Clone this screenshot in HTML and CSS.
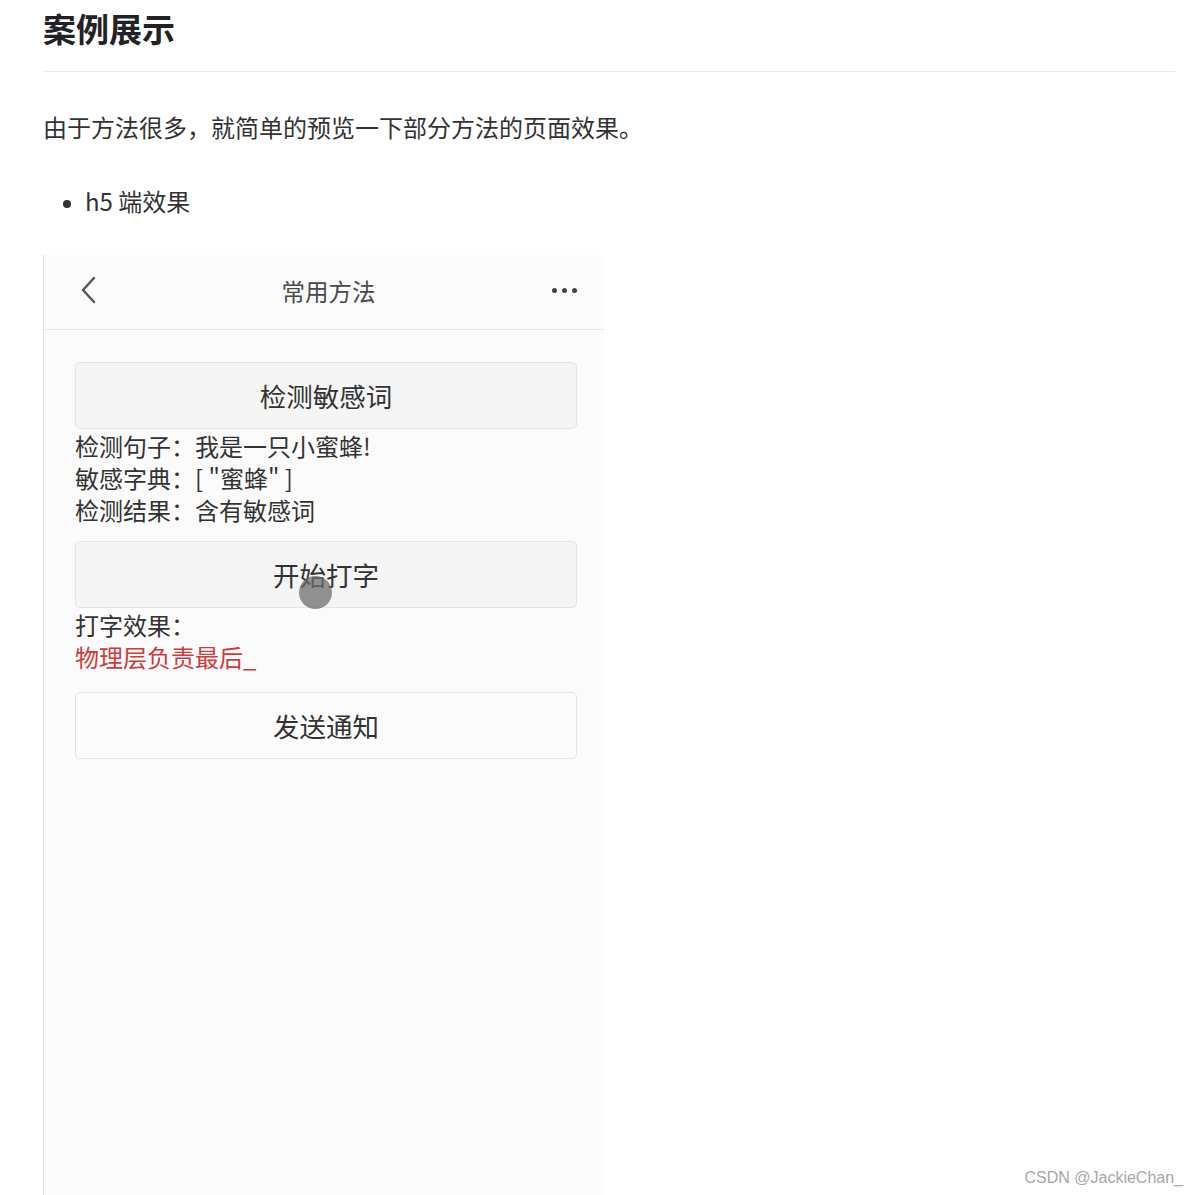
FILE: index.html
```html
<!DOCTYPE html>
<html lang="zh-CN">
<head>
<meta charset="utf-8">
<title>案例展示</title>
<link rel="stylesheet" href="styles.css">
</head>
<body>
<main class="article">
  <h2 class="title">案例展示</h2>
  <p class="intro">由于方法很多，就简单的预览一下部分方法的页面效果。</p>
  <ul class="list">
    <li>h5 端效果</li>
  </ul>
  <div class="phone">
    <header class="nav">
      <svg class="nav-back" width="20" height="30" viewBox="0 0 20 30"><path d="M15 3 L4 15 L15 27" fill="none" stroke="#555" stroke-width="2.4" stroke-linecap="round" stroke-linejoin="round"/></svg>
      <span class="nav-title">常用方法</span>
      <span class="nav-more"><i></i><i></i><i></i></span>
    </header>
    <section class="content">
      <div class="btn">检测敏感词</div>
      <div class="lines lines-a">
        <div>检测句子：我是一只小蜜蜂!</div>
        <div>敏感字典：[ "蜜蜂" ]</div>
        <div>检测结果：含有敏感词</div>
      </div>
      <div class="btn">开始打字<span class="touch"></span></div>
      <div class="lines lines-b">
        <div class="first">打字效果：</div>
        <div class="red">物理层负责最后_</div>
      </div>
      <div class="btn btn-light">发送通知</div>
    </section>
  </div>
</main>
<div class="watermark">CSDN @JackieChan_</div>
</body>
</html>
```

FILE: styles.css
```css
html, body {
  margin: 0;
  padding: 0;
  background: #ffffff;
}
body {
  font-family: "Noto Sans CJK SC", "Noto Sans", sans-serif;
  color: #333;
  height: 1195px;
  overflow: hidden;
  position: relative;
}
.article {
  width: 1132px;
  margin-left: 43px;
}
.title {
  margin: 0;
  padding-top: 8px;
  padding-bottom: 23px;
  font-size: 33px;
  line-height: 40px;
  font-weight: 700;
  color: #222226;
  border-bottom: 1px solid #e8e8ed;
}
.intro {
  margin: 37px 0 0;
  font-size: 24px;
  line-height: 36px;
  color: #333;
}
.list {
  margin: 38px 0 0;
  padding-left: 42px;
  font-size: 24px;
  line-height: 36px;
  color: #333;
}
.list li::marker {
  font-size: 20px;
}
.phone {
  margin-top: 36px;
  width: 560px;
  height: 960px;
  background: #fbfbfb;
  border-left: 1px solid #e2e2e2;
}
.nav {
  height: 75px;
  border-bottom: 1px solid #e6e6e6;
  display: flex;
  align-items: center;
  justify-content: space-between;
  padding: 0 27px 0 35px;
  box-sizing: border-box;
}
.nav-back {
  display: block;
  margin-top: -4px;
}
.nav-title {
  font-size: 23.5px;
  color: #4a4a4a;
  margin-left: 6px;
  margin-top: -3px;
}
.nav-more {
  display: flex;
  gap: 5px;
  margin-top: -3px;
}
.nav-more i {
  width: 5px;
  height: 5px;
  border-radius: 50%;
  background: #444;
}
.content {
  padding: 32px 27px 0 31px;
}
.btn {
  height: 65px;
  border: 1px solid #e4e4e4;
  border-radius: 5px;
  background: #f5f5f5;
  display: flex;
  align-items: center;
  justify-content: center;
  font-size: 26.5px;
  color: #333;
  position: relative;
}
.btn-light {
  background: #fcfcfc;
}
.touch {
  position: absolute;
  width: 33px;
  height: 33px;
  border-radius: 50%;
  background: rgba(110, 110, 110, 0.75);
  left: 223px;
  top: 34px;
}
.lines {
  font-size: 24px;
  line-height: 32px;
  color: #333;
}
.lines-a {
  padding-top: 1px;
  padding-bottom: 15px;
}
.lines-b {
  padding-top: 0;
  padding-bottom: 19px;
}
.lines-b .first {
  line-height: 33px;
}
.red {
  color: #cf3a3a;
}
.watermark {
  position: absolute;
  right: 15px;
  top: 1169px;
  font-family: "Liberation Sans", Arial, sans-serif;
  font-size: 16px;
  color: #a8a8a8;
}
```
